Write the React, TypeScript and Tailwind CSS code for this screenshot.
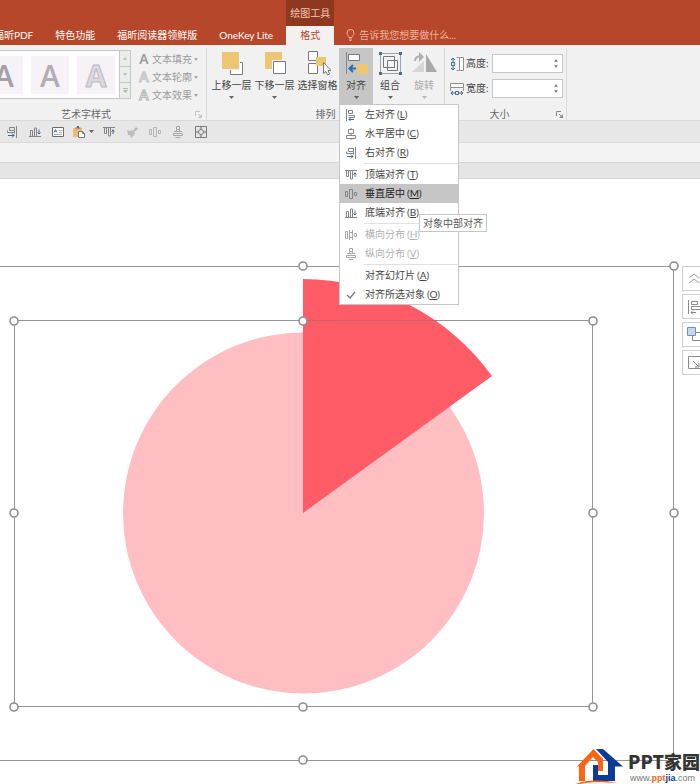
import React from "react";
import clsx from "clsx";

type IconProps = { className?: string };
type MenuEntry = {
  label: string;
  hotkey: string;
  icon: React.ReactNode;
  active?: boolean;
  disabled?: boolean;
  divider?: boolean;
};

const GRAY = "#858585";
const BLUE = "#3c6a94";

const Svg = ({
  children,
  size = 12,
  className,
}: IconProps & { children: React.ReactNode; size?: number }) => (
  <svg
    width={size}
    height={size}
    viewBox={`0 0 ${size} ${size}`}
    fill="none"
    className={clsx("block shrink-0", className)}
    aria-hidden="true"
  >
    {children}
  </svg>
);

const AlignLeftIcon = () => (
  <Svg>
    <path d="M1.5 0v12M3.5 1.5h4v3h-4zM3.5 6.5h6v2h-6" stroke={GRAY} />
    <path d="M9 10.5H4M6 8.5l-2 2 2 2" stroke={BLUE} />
  </Svg>
);

const AlignCenterIcon = () => (
  <Svg>
    <path
      d="M3.5 1.5h5v4h-5zM1.5 7.5h9v3h-9zM6 0v1.5M6 5.5v2M6 10.5V12"
      stroke={GRAY}
    />
  </Svg>
);

const AlignRightIcon = () => (
  <Svg>
    <path d="M10.5 0v12M8.5 1.5h-5v3h5zM8.5 6.5h-7v-2M8.5 4.5v3" stroke={GRAY} />
    <path d="M2 9.5h6M6 7.5l2 2-2 2" stroke={BLUE} />
  </Svg>
);

const AlignTopIcon = () => (
  <Svg>
    <path d="M0 1.5h12M1.5 2v5.500h2V2M5.500 2v8h2V2" stroke={GRAY} />
    <path d="M10 8V3.500M8.500 5.500L10 4l1.500 1.500" stroke={BLUE} />
  </Svg>
);

const AlignMiddleIcon = ({ className }: IconProps) => (
  <Svg className={className}>
    <path
      d="M.5 3.500h2v5h-2zM4.500 1.500h3v9h-3zM9.500 4.500h2v3h-2z"
      stroke={GRAY}
    />
  </Svg>
);

const AlignBottomIcon = () => (
  <Svg>
    <path d="M0 10.500h12M1.500 10V4.500h2V10M5.500 10V2h2v8" stroke={GRAY} />
    <path d="M10 3.500V8M8.500 6.500L10 8l1.500-1.500" stroke={BLUE} />
  </Svg>
);

const DistributeHIcon = () => (
  <Svg>
    <path
      d="M.5 2.500h2v7h-2zM4.500 1v10M4.500 3.500h3M4.500 8.500h3M7.500 1v10M9.500 4.500h2v3h-2z"
      stroke="#a6a6a6"
    />
  </Svg>
);

const DistributeVIcon = () => (
  <Svg>
    <path
      d="M4.500.5h3v3h-3zM2 5.500h8M4.500 3.500v2M7.500 3.500v2M1.500 7.500h9v2h-9zM3.500 11.500h5"
      stroke="#a6a6a6"
    />
  </Svg>
);

const CheckIcon = () => (
  <Svg>
    <path d="M2 6l3 3 5-6" stroke="#777" strokeWidth="1.300" />
  </Svg>
);

const TextBoxIcon = () => (
  <Svg>
    <path d="M.5 1.500h11v9H.5z" fill="#fff" stroke="#6b6b6b" />
    <path d="M2 6.500l1.500-3 1.500 3M2.500 5.500h2" stroke="#3c5a80" strokeWidth=".8" />
    <path d="M6.500 4.500h4M2 8.500h8M7 6.500h3" stroke="#a8b4b0" />
  </Svg>
);

const PasteIcon = () => (
  <Svg>
    <path d="M0 2h9v9H0z" fill="#edb978" />
    <path d="M2.500 2.500v-1h1.500V0h2v1.500h1.500v1z" fill="#666" />
    <path d="M5.500 5.500h4l2 2v4h-6z" fill="#fff" stroke="#777" />
    <path d="M9.500 5.500v2h2" stroke="#777" />
  </Svg>
);

const BrushIcon = () => (
  <Svg>
    <path d="M7 5l3-4 2 2-4 3z" fill="#b5b5b5" />
    <path d="M1 4l3 1 2-1 3 3-1 2-3 3-1-3-2 0z" fill="#bdbdbd" />
  </Svg>
);

const FitIcon = () => (
  <Svg>
    <path d="M.5.5h11v11H.5z" stroke="#7a7a7a" />
    <circle cx="6" cy="6" r="2.500" stroke="#7a7a7a" />
    <path
      d="M4.500 2.500L6 1l1.500 1.500zM4.500 9.500L6 11l1.500-1.500zM2.500 4.500L1 6l1.500 1.500zM9.500 4.500L11 6 9.500 7.500z"
      fill="#666"
    />
  </Svg>
);

const ForwardIcon = () => (
  <Svg size={26}>
    <path d="M11.500 12.500h12v12h-12z" fill="#fff" stroke="#7a7a7a" />
    <path d="M2 1h19v19H2z" fill="#f0f0f0" />
    <path d="M3 2h17v17H3z" fill="#edc673" />
  </Svg>
);

const BackwardIcon = () => (
  <Svg size={26}>
    <path d="M3 2h17v17H3z" fill="#edc673" />
    <path d="M10 10h14v15H10z" fill="#f0f0f0" />
    <path d="M11.500 11.500h12v12h-12z" fill="#fff" stroke="#7a7a7a" />
  </Svg>
);

const SelectionPaneIcon = () => (
  <Svg size={26}>
    <path d="M3.500 1.500h9v9h-9zM3.500 13.500h9v10h-9z" fill="#fff" stroke="#7a7a7a" />
    <path d="M11 7h10v9H11z" fill="#edc673" />
    <path d="M18.500 12.500v11l2.500-2 1.500 3.500 2-1-1.500-3.500h3z" fill="#fff" stroke="#777" />
  </Svg>
);

const AlignIcon = () => (
  <Svg size={26}>
    <path d="M3.500 2v22" stroke="#7a8894" />
    <path d="M5.500 4.500h11v6h-11z" fill="#fff" stroke="#777" />
    <path d="M14 14h11v10H14z" fill="#edc673" />
    <path d="M13 18.500H7M10 15l-3.500 3.500L10 22" stroke="#2f6da3" strokeWidth="2" />
  </Svg>
);

const GroupIcon = () => (
  <Svg size={26}>
    <path d="M3.500 3.500h20v20h-20z" stroke="#9aa4ae" />
    <path d="M6.500 6.500h11v11h-11zM10.500 10.500h10v10h-10z" fill="#f4f4f4" stroke="#777" />
    <path d="M10.500 17.500h7v-7" stroke="#777" />
    <path d="M2 2h3v3H2zM22 2h3v3h-3zM2 22h3v3H2zM22 22h3v3h-3z" fill="#586b85" />
  </Svg>
);

const RotateIcon = () => (
  <Svg size={26}>
    <path d="M13 11v11H1z" fill="#d6d6d6" />
    <path d="M15 4v18h11z" fill="#a9a9a9" />
    <path d="M4 11c0-4 3-5 6-4" stroke="#b0b0b0" strokeWidth="2" />
    <path d="M8 2l5 5-5 5z" fill="#b0b0b0" />
  </Svg>
);

const HeightIcon = () => (
  <Svg size={14}>
    <path d="M6.500.5H9M6.500 13.500H9" stroke="#999" />
    <path d="M9.500.5h4v13h-4z" fill="#fff" stroke="#8a9283" />
    <path d="M3 1v4M3 9v4M1 3l2-2 2 2M1 11l2 2 2-2M1.500 5.500h3v3h-3z" stroke={BLUE} />
  </Svg>
);

const WidthIcon = () => (
  <Svg size={14}>
    <path d="M.5 1.500h13v4H.5z" fill="#fff" stroke="#8a9283" />
    <path d="M.5 6v3M13.500 6v3" stroke="#999" />
    <path d="M1 11h4M9 11h4M3 9l-2 2 2 2M11 9l2 2-2 2M5.500 9.500h3v3h-3z" stroke={BLUE} />
  </Svg>
);

const Launcher = ({ className }: IconProps) => (
  <button type="button" aria-label="更多选项" className={className}>
    <svg width="7" height="7" viewBox="0 0 7 7" fill="none">
      <path d="M.5 5V.5H5M3 3l3 3" stroke="currentColor" />
      <path d="M7 3v4H3z" fill="currentColor" />
    </svg>
  </button>
);

const Caret = ({ className }: IconProps) => (
  <svg width="5" height="3" viewBox="0 0 5 3" className={className} aria-hidden="true">
    <path d="M0 0h5L2.500 3z" fill="currentColor" />
  </svg>
);

const tabs = ["福昕PDF", "特色功能", "福昕阅读器领鲜版", "OneKey Lite"];

const TitleBar = () => (
  <header className="flex h-[45px] items-end bg-[#b7472a] text-white">
    <nav className="-ml-1.5 flex gap-[22px] pr-[13px]">
      {tabs.map((tab) => (
        <button key={tab} type="button" className="h-5 whitespace-nowrap">
          {tab}
        </button>
      ))}
    </nav>
    <div className="flex h-full w-12 shrink-0 flex-col text-center">
      <p className="h-[26px] bg-[#8f3820] text-[#f3c5b4] leading-[27px]">绘图工具</p>
      <button type="button" className="flex-1 bg-[#f3f1f0] text-[#b7472a]">
        格式
      </button>
    </div>
    <label className="ml-3 flex h-5 flex-1 items-center gap-1 text-[#efb29c]">
      <svg width="9" height="12" viewBox="0 0 9 12" fill="none" className="shrink-0">
        <path
          d="M3 8.500C3 7 1 6.500 1 4a3.500 3.500 0 017 0c0 2.500-2 3-2 4.500zM3 10h3M3.500 11.500h2"
          stroke="currentColor"
        />
      </svg>
      <input
        type="text"
        aria-label="告诉我您想要做什么"
        placeholder="告诉我您想要做什么..."
        className="w-full bg-transparent outline-none placeholder:text-[#efb29c]"
      />
    </label>
  </header>
);

const letterStyles = [
  "font-semibold text-[#a5a0a6]",
  "font-semibold text-[#b2adb4]",
  "font-bold text-[#dcd8de] [-webkit-text-stroke:1px_#bdb8c0]",
];

const textTools = [
  { label: "文本填充", style: "text-[#999]" },
  { label: "文本轮廓", style: "text-[#e4e4e4] [-webkit-text-stroke:1px_#c4c4c4]" },
  { label: "文本效果", style: "text-white [-webkit-text-stroke:1px_#b4b4b4]" },
];

const WordArtGroup = () => (
  <section className="relative -ml-[34px] flex w-[241px] shrink-0 flex-col border-r border-[#d8d8d8]">
    <div className="flex gap-2 pt-0.5">
      <div className="flex h-[49px] w-[165px] border border-[#c6c6c6] bg-white">
        <div className="flex flex-1 items-center justify-end gap-2 pr-1">
          {letterStyles.map((style) => (
            <button
              key={style}
              type="button"
              aria-label="艺术字"
              className={clsx(
                "h-[38px] w-[38px] bg-[#f6f2f8] pt-0.5 font-['Open_Sans',sans-serif] text-3xl leading-9",
                style
              )}
            >
              A
            </button>
          ))}
        </div>
        <div className="flex w-[11px] flex-col divide-y divide-[#c6c6c6] border-l border-[#c6c6c6] bg-[#ececec] text-[#b5b5b5]">
          <button type="button" aria-label="上一行" className="grid flex-1 place-items-center">
            <Caret className="w-1 rotate-180" />
          </button>
          <button type="button" aria-label="下一行" className="grid flex-1 place-items-center">
            <Caret className="w-1" />
          </button>
          <button type="button" aria-label="其他" className="grid flex-1 place-items-center">
            <svg width="5" height="5" viewBox="0 0 5 5" aria-hidden="true">
              <path d="M0 0h5v1H0zM0 2h5L2.500 5z" fill="currentColor" />
            </svg>
          </button>
        </div>
      </div>
      <div className="flex flex-col text-[#9b9b9b]">
        {textTools.map(({ label, style }) => (
          <button key={label} type="button" disabled className="flex h-[18px] items-center">
            <span
              aria-hidden="true"
              className={clsx(
                "mr-[3px] w-[10px] font-['Open_Sans',sans-serif] text-sm leading-[18px] font-semibold",
                style
              )}
            >
              A
            </span>
            {label}
            <Caret className="ml-0.5 w-1" />
          </button>
        ))}
      </div>
    </div>
    <p className="mt-auto h-3 text-center leading-3 text-[#666]">艺术字样式</p>
    <Launcher className="absolute right-1 bottom-0.5 text-[#c2c2c2]" />
  </section>
);

const RibbonButton = ({
  label,
  icon,
  className,
  disabled,
}: {
  label: string;
  icon: React.ReactNode;
  className: string;
  disabled?: boolean;
}) => (
  <button
    type="button"
    disabled={disabled}
    className={clsx(
      "flex h-14 flex-col items-center pt-0.5 whitespace-nowrap",
      disabled ? "text-[#a9a9a9]" : "text-[#444]",
      className
    )}
  >
    {icon}
    <span className="h-[18px] leading-[18px]">{label}</span>
    <Caret className="mt-0.5 opacity-80" />
  </button>
);

const menuEntries: MenuEntry[] = [
  { label: "左对齐", hotkey: "L", icon: <AlignLeftIcon /> },
  { label: "水平居中", hotkey: "C", icon: <AlignCenterIcon /> },
  { label: "右对齐", hotkey: "R", icon: <AlignRightIcon /> },
  { label: "顶端对齐", hotkey: "T", icon: <AlignTopIcon />, divider: true },
  { label: "垂直居中", hotkey: "M", icon: <AlignMiddleIcon />, active: true },
  { label: "底端对齐", hotkey: "B", icon: <AlignBottomIcon /> },
  { label: "横向分布", hotkey: "H", icon: <DistributeHIcon />, divider: true, disabled: true },
  { label: "纵向分布", hotkey: "V", icon: <DistributeVIcon />, disabled: true },
  { label: "对齐幻灯片", hotkey: "A", icon: null, divider: true },
  { label: "对齐所选对象", hotkey: "O", icon: <CheckIcon /> },
];

const AlignMenu = () => (
  <div
    role="menu"
    className="absolute top-full left-0 z-20 w-[120px] border border-[#c6c6c6] bg-white"
  >
    {menuEntries.map(({ label, hotkey, icon, active, disabled, divider }) => (
      <React.Fragment key={label}>
        {divider && <hr className="my-px ml-6 border-[#e1e1e1]" />}
        <button
          type="button"
          role="menuitem"
          disabled={disabled}
          className={clsx(
            "flex h-[19px] w-full items-center pl-[5px] whitespace-nowrap",
            active && "bg-[#c6c6c6]",
            disabled ? "text-[#b0b0b0]" : active ? "text-[#222]" : "text-[#444]"
          )}
        >
          <span className="mr-2 w-3">{icon}</span>
          {label}
          <span className="ml-0.5">
            (<u>{hotkey}</u>)
          </span>
        </button>
      </React.Fragment>
    ))}
    <div
      role="tooltip"
      className="absolute top-[109px] left-[79px] h-[18px] border border-[#c6c6c6] bg-white px-[3px] leading-4 whitespace-nowrap text-[#555]"
    >
      对象中部对齐
    </div>
  </div>
);

const ArrangeGroup = () => (
  <section className="flex w-[238px] shrink-0 flex-col border-r border-[#d8d8d8]">
    <div className="flex pl-[3px]">
      <RibbonButton label="上移一层" icon={<ForwardIcon />} className="w-[43px]" />
      <RibbonButton label="下移一层" icon={<BackwardIcon />} className="w-[43px]" />
      <button
        type="button"
        className="flex h-14 w-[43px] flex-col items-center pt-0.5 whitespace-nowrap text-[#444]"
      >
        <SelectionPaneIcon />
        <span className="h-[18px] leading-[18px]">选择窗格</span>
      </button>
      <div className="relative">
        <RibbonButton label="对齐" icon={<AlignIcon />} className="w-[34px] bg-[#c6c6c6]" />
        <AlignMenu />
      </div>
      <RibbonButton label="组合" icon={<GroupIcon />} className="w-[34px]" />
      <RibbonButton label="旋转" icon={<RotateIcon />} className="w-[34px]" disabled />
    </div>
    <p className="mt-auto h-3 text-center leading-3 text-[#666]">排列</p>
  </section>
);

const SizeField = ({ id, label, icon }: { id: string; label: string; icon: React.ReactNode }) => (
  <div className="flex h-[19px] items-center">
    {icon}
    <label htmlFor={id} className="ml-0.5 w-[26px] text-[#444]">
      {label}:
    </label>
    <div className="flex h-full w-[71px] border border-[#c6c6c6] bg-white text-[#777]">
      <input id={id} type="text" className="w-full min-w-0 flex-1 px-1 outline-none" />
      <div className="flex w-3 flex-col items-center justify-evenly">
        <button type="button" aria-label={`增加${label}`}>
          <Caret className="w-1 rotate-180" />
        </button>
        <button type="button" aria-label={`减少${label}`}>
          <Caret className="w-1" />
        </button>
      </div>
    </div>
  </div>
);

const SizeGroup = () => (
  <section className="relative flex w-[122px] shrink-0 flex-col border-r border-[#d8d8d8]">
    <div className="flex flex-col gap-1.5 pt-1.5 pl-[5px]">
      <SizeField id="shape-height" label="高度" icon={<HeightIcon />} />
      <SizeField id="shape-width" label="宽度" icon={<WidthIcon />} />
    </div>
    <p className="mt-auto h-3 pr-3 text-center leading-3 text-[#666]">大小</p>
    <Launcher className="absolute right-[3px] bottom-0.5 text-[#888]" />
  </section>
);

const quickTools = [
  { label: "右对齐", icon: <AlignRightIcon /> },
  { label: "底端对齐", icon: <AlignBottomIcon /> },
  { label: "文本框", icon: <TextBoxIcon /> },
  { label: "粘贴", icon: <PasteIcon />, caret: true },
  { label: "顶端对齐", icon: <AlignTopIcon /> },
  { label: "格式刷", icon: <BrushIcon /> },
  { label: "垂直居中", icon: <AlignMiddleIcon className="opacity-50" /> },
  { label: "纵向分布", icon: <DistributeVIcon /> },
  { label: "适应窗口", icon: <FitIcon /> },
];

const QuickAccess = () => (
  <div className="flex h-[23px] items-center border-y border-[#dadada] bg-[#e7e7e7]">
    {quickTools.map(({ label, icon, caret }) => (
      <button
        key={label}
        type="button"
        aria-label={label}
        className={clsx("flex items-center justify-center", caret ? "w-7 gap-1" : "w-[23px]")}
      >
        {icon}
        {caret && <Caret className="text-[#666]" />}
      </button>
    ))}
  </div>
);

const outerHandles = [
  [303, 266],
  [674, 266],
  [674, 513],
  [303, 760],
];

const innerHandles = [
  [14, 321],
  [303, 321],
  [593, 321],
  [14, 513],
  [593, 513],
  [14, 707],
  [303, 707],
  [593, 707],
];

const PieDrawing = () => (
  <svg viewBox="0 179 700 605" className="block h-auto w-full" role="img" aria-label="饼图">
    <circle cx="303.500" cy="513" r="180.500" fill="#ffbfc2" />
    <path d="M303 513V279a234 234 0 01189 97z" fill="#ff5c68" />
    <path d="M-5 266.500h678.500v494H-5z" fill="none" stroke="#959595" />
    <path d="M14.500 320.500h578v386h-578z" fill="none" stroke="#959595" />
    <path d="M308 320.500h129" stroke="#c9636b" />
    <g fill="#fff" stroke="#8f8f8f" strokeWidth="1.600">
      {[...outerHandles, ...innerHandles].map(([x, y]) => (
        <circle key={`${x}-${y}`} cx={x} cy={y} r="4" />
      ))}
    </g>
  </svg>
);

const sideTools = [
  {
    label: "折叠",
    icon: <path d="M6 11l5-4 5 4M6 16l5-4 5 4" stroke="#9a9a9a" />,
  },
  {
    label: "对齐",
    icon: (
      <>
        <path d="M5.500 5v14M8.500 6.500h6v3h-6zM18 11.500H8.500v3H18" stroke="#8a8a8a" />
        <path d="M13 17.500H8M10 15.500l-2 2 2 2" stroke="#8a8a8a" />
      </>
    ),
  },
  {
    label: "图层",
    icon: (
      <>
        <path d="M9.500 9.500h9v8h-9z" fill="#fff" stroke="#888" />
        <path d="M4.500 4.500h8v8h-8z" fill="#c4d7ee" stroke="#7d8ea5" />
      </>
    ),
  },
  {
    label: "缩放",
    icon: (
      <>
        <path d="M18 5.500H5.500v12H18" stroke="#8a8a8a" />
        <path d="M10 10l6 6M16 12v4h-4" stroke="#8a8a8a" />
      </>
    ),
  },
];

const SideTools = () => (
  <div className="absolute top-[87px] -right-1.5 flex flex-col gap-[3px]">
    {sideTools.map(({ label, icon }) => (
      <button
        key={label}
        type="button"
        aria-label={label}
        className="h-[25px] w-6 border border-[#cfcfcf] bg-white"
      >
        <svg width="22" height="23" viewBox="0 0 22 23" fill="none">
          {icon}
        </svg>
      </button>
    ))}
  </div>
);

const SiteLogo = () => (
  <div className="absolute right-0 bottom-0 flex items-end gap-1">
    <svg width="48" height="36" viewBox="4 4 48 36" fill="none" aria-hidden="true">
      <path d="M24 5h7l20 17.500h-8V37H21V21h5v10h10V18z" fill="#0c3a94" />
      <path d="M5 22.500L21.500 5 31 15v12h-5V18l-5-5-8 9v15H7V22.500z" fill="#ff6414" />
      <path d="M4 40c8-4 24-5 42-1-18-1.500-32-1-38 1z" fill="#ff6414" />
    </svg>
    <div className="whitespace-nowrap">
      <p className="font-['Noto_Sans_CJK_SC',sans-serif] text-lg leading-[22px] font-black text-[#333]">
        PPT家园
      </p>
      <p className="pl-0.5 font-['Liberation_Sans',sans-serif] text-[9px] leading-3 text-[#777]">
        www.<b className="text-[#ff6414]">ppt</b>
        <b className="text-[#0c3a94]">jia</b>.com
      </p>
    </div>
  </div>
);

const App = () => (
  <div className="flex min-h-screen flex-col overflow-x-hidden bg-white font-['Lato','Noto_Sans_CJK_SC',sans-serif] text-[10px]">
    <TitleBar />
    <div className="flex h-[75px] bg-[#f1f1f1] pt-[3px]">
      <WordArtGroup />
      <ArrangeGroup />
      <SizeGroup />
    </div>
    <QuickAccess />
    <div className="h-[19px] bg-[#f3f3f3]" />
    <div className="h-[17px] border-y border-[#d6d6d6] bg-[#e5e5e5]" />
    <main className="relative flex-1 overflow-hidden">
      <PieDrawing />
      <SideTools />
      <SiteLogo />
    </main>
  </div>
);

export default App;
